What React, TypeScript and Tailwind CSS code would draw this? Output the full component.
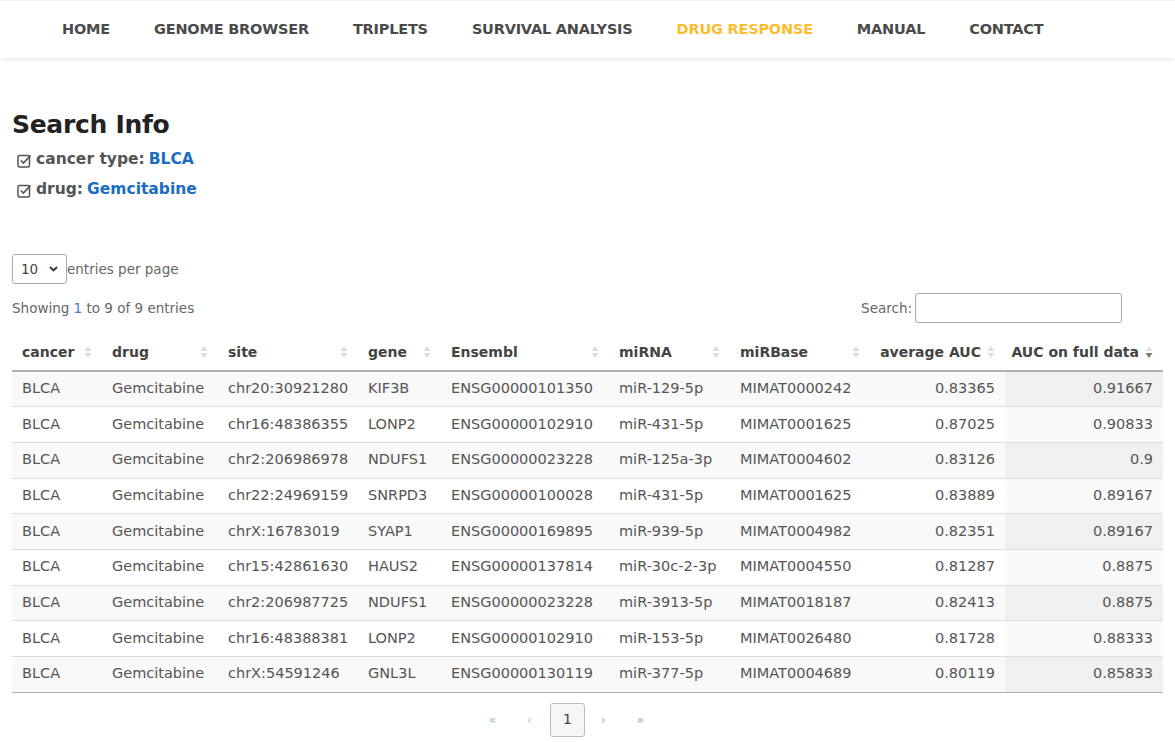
import React from 'react'

const navItems = ['HOME', 'GENOME BROWSER', 'TRIPLETS', 'SURVIVAL ANALYSIS', 'DRUG RESPONSE', 'MANUAL', 'CONTACT']

const rows = [
  ['BLCA', 'Gemcitabine', 'chr20:30921280', 'KIF3B', 'ENSG00000101350', 'miR-129-5p', 'MIMAT0000242', '0.83365', '0.91667'],
  ['BLCA', 'Gemcitabine', 'chr16:48386355', 'LONP2', 'ENSG00000102910', 'miR-431-5p', 'MIMAT0001625', '0.87025', '0.90833'],
  ['BLCA', 'Gemcitabine', 'chr2:206986978', 'NDUFS1', 'ENSG00000023228', 'miR-125a-3p', 'MIMAT0004602', '0.83126', '0.9'],
  ['BLCA', 'Gemcitabine', 'chr22:24969159', 'SNRPD3', 'ENSG00000100028', 'miR-431-5p', 'MIMAT0001625', '0.83889', '0.89167'],
  ['BLCA', 'Gemcitabine', 'chrX:16783019', 'SYAP1', 'ENSG00000169895', 'miR-939-5p', 'MIMAT0004982', '0.82351', '0.89167'],
  ['BLCA', 'Gemcitabine', 'chr15:42861630', 'HAUS2', 'ENSG00000137814', 'miR-30c-2-3p', 'MIMAT0004550', '0.81287', '0.8875'],
  ['BLCA', 'Gemcitabine', 'chr2:206987725', 'NDUFS1', 'ENSG00000023228', 'miR-3913-5p', 'MIMAT0018187', '0.82413', '0.8875'],
  ['BLCA', 'Gemcitabine', 'chr16:48388381', 'LONP2', 'ENSG00000102910', 'miR-153-5p', 'MIMAT0026480', '0.81728', '0.88333'],
  ['BLCA', 'Gemcitabine', 'chrX:54591246', 'GNL3L', 'ENSG00000130119', 'miR-377-5p', 'MIMAT0004689', '0.80119', '0.85833'],
]

const headers = [
  { label: 'cancer', w: 'w-[90px]' },
  { label: 'drug', w: 'w-[116px]' },
  { label: 'site', w: 'w-[140px]' },
  { label: 'gene', w: 'w-[83px]' },
  { label: 'Ensembl', w: 'w-[168px]' },
  { label: 'miRNA', w: 'w-[121px]' },
  { label: 'miRBase', w: 'w-[140px]' },
  { label: 'average AUC', w: 'w-[135px]' },
  { label: 'AUC on full data', w: 'w-[158px]' },
]

function SortIcon({ desc }: { desc?: boolean }) {
  return (
    <svg width="8" height="14" viewBox="0 0 8 14" className="shrink-0">
      <path d="M4 1 L7.5 6 L0.5 6 Z" fill={desc ? '#e2e2e2' : '#dcdcdc'} />
      <path d="M4 13 L7.5 8 L0.5 8 Z" fill={desc ? '#7a7a7a' : '#dcdcdc'} />
    </svg>
  )
}

function CheckIcon() {
  return (
    <svg width="15" height="15" viewBox="0 0 15 15" className="shrink-0">
      <rect x="1" y="2.5" width="11.5" height="11.5" rx="1.5" fill="none" stroke="#555" strokeWidth="1.5" />
      <path d="M3.8 7.5 L6.4 10 L13.5 2.5" fill="none" stroke="#555" strokeWidth="1.7" />
    </svg>
  )
}

export default function App() {
  return (
    <div className="min-h-[742px] bg-white text-[#555]" style={{ fontFamily: '"DejaVu Sans", sans-serif' }}>
      {/* top nav */}
      <header className="h-[58px] bg-white shadow-[0_2px_4px_rgba(0,0,0,0.08)] border-t border-[#f2f2f2]">
        <nav className="flex items-center h-full pl-[62px] gap-[44px] pt-[1px]">
          {navItems.map((item) => (
            <a
              key={item}
              className={`text-[14.5px] font-bold tracking-[-0.2px] ${item === 'DRUG RESPONSE' ? 'text-[#fbbd2e]' : 'text-[#4a4a4a]'}`}
            >
              {item}
            </a>
          ))}
        </nav>
      </header>

      <main className="px-3">
        {/* search info */}
        <section className="pt-[51px]">
          <h2 className="text-[25px] font-bold text-[#222] leading-[32px] tracking-[-0.3px]">Search Info</h2>
          <ul className="mt-[8px] pl-[5px] flex flex-col gap-[8px] text-[15.5px] font-bold">
            <li className="flex items-center gap-[4px] h-[22px]">
              <CheckIcon />
              <span>cancer type:</span>
              <span className="text-[#1a6dc2]">BLCA</span>
            </li>
            <li className="flex items-center gap-[4px] h-[22px]">
              <CheckIcon />
              <span>drug:</span>
              <span className="text-[#1a6dc2]">Gemcitabine</span>
            </li>
          </ul>
        </section>

        {/* table controls */}
        <div className="mt-[53px] flex items-center h-[30px] text-[13.5px] text-[#666]">
          <div className="w-[55px] h-[30px] border border-[#aaa] rounded-[3px] flex items-center justify-between px-[8px]">
            <span className="text-[#444]">10</span>
            <svg width="9" height="6" viewBox="0 0 9 6">
              <path d="M1 1 L4.5 4.5 L8 1" fill="none" stroke="#333" strokeWidth="1.8" />
            </svg>
          </div>
          <span>entries per page</span>
        </div>

        <div className="mt-[9px] flex items-center justify-between h-[30px] text-[13.5px] text-[#666]">
          <span>
            Showing <span className="text-[#3b7fc4]">1</span> to 9 of 9 entries
          </span>
          <div className="flex items-center gap-[3px] mr-[41px]">
            <span>Search:</span>
            <input className="w-[207px] h-[30px] border border-[#aaa] rounded-[3px] bg-white" />
          </div>
        </div>

        {/* data table */}
        <table className="mt-[11px] w-[1151px] table-fixed border-collapse text-[14.5px]">
          <thead>
            <tr className="h-[37px] border-b-2 border-[#b0b0b0]">
              {headers.map((h, i) => (
                <th key={h.label} className={`${h.w} px-[10px] font-bold text-[#444] text-[14px]`}>
                  <div className={`flex items-center gap-[6px] ${i >= 7 ? 'justify-end' : 'justify-between'}`}>
                    <span className="whitespace-nowrap">{h.label}</span>
                    <SortIcon desc={i === 8} />
                  </div>
                </th>
              ))}
            </tr>
          </thead>
          <tbody>
            {rows.map((r, ri) => (
              <tr key={ri} className={`h-[35.7px] border-b ${ri === rows.length - 1 ? 'border-[#b0b0b0]' : 'border-[#ddd]'} ${ri % 2 === 0 ? 'bg-[#f9f9f9]' : 'bg-white'}`}>
                {r.map((c, ci) => (
                  <td
                    key={ci}
                    className={`px-[10px] py-0 whitespace-nowrap ${ci >= 7 ? 'text-right' : 'text-left'} ${
                      ci === 8 ? (ri % 2 === 0 ? 'bg-[#f0f0f0]' : 'bg-[#fafafa]') : ''
                    }`}
                  >
                    {c}
                  </td>
                ))}
              </tr>
            ))}
          </tbody>
        </table>

        {/* pagination */}
        <div className="mt-[10px] flex items-center justify-center w-[1151px] pr-[42px] text-[12px]">
          <span className="w-[37px] text-center text-[#9fb6d8]">«</span>
          <span className="w-[37px] text-center text-[#e0b8a0]">‹</span>
          <span className="w-[35px] h-[34px] ml-[2px] border border-[#bbb] rounded-[3px] bg-[#f6f6f6] flex items-center justify-center text-[14px] text-[#444]">
            1
          </span>
          <span className="w-[37px] text-center text-[#aaa]">›</span>
          <span className="w-[37px] text-center text-[#aaa]">»</span>
        </div>
      </main>
    </div>
  )
}
